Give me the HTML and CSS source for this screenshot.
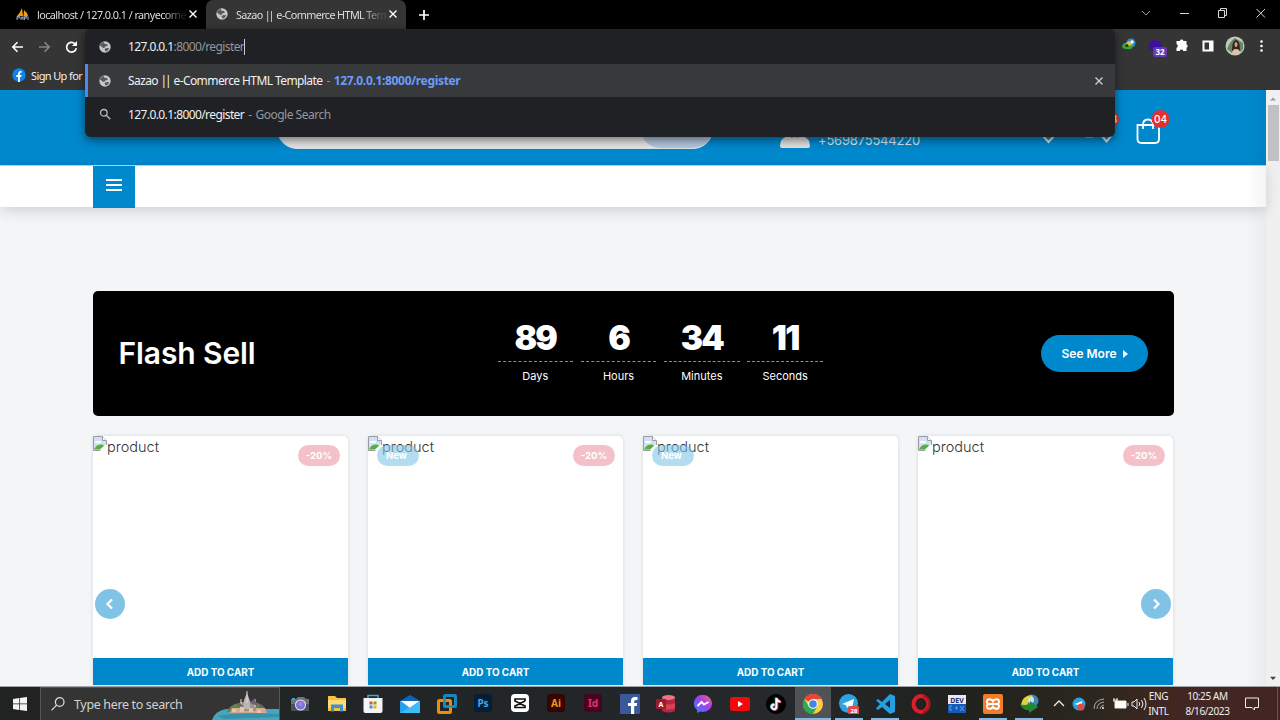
FILE: index.html
```html
<!DOCTYPE html>
<html lang="en">
<head>
<meta charset="utf-8">
<title>Sazao || e-Commerce HTML Template</title>
<link rel="stylesheet" href="styles.css">
</head>
<body>
<svg class="defs" aria-hidden="true">
  <symbol id="globe" viewBox="0 0 12 12"><circle cx="6" cy="6" r="5.7" fill="#c4c7cb"/><path d="M5 .9C3 1.1 1.3 2.7 1 4.6l3.3 2.3c1.3 0 1.9-.4 1.8-1.3l2.2-.6c.8-.9.3-1.7-.9-2L5.300 2.800z" fill="#44474b" opacity=".85"/><path d="M5.500 8l2-1 2.700.300c-.6 1.900-1.900 3.100-3.700 3.300z" fill="#44474b" opacity=".85"/></symbol>
  <symbol id="cross" viewBox="0 0 10 10"><path d="M1.500 1.500l7 7M8.500 1.500l-7 7" stroke="currentColor" stroke-width="1.400" fill="none"/></symbol>
  <symbol id="broken" viewBox="0 0 14 15"><path d="M.5.500h9l4 4v4.500l-5 5.500h-8z" fill="#cfe0f7" stroke="#9b9da3"/><path d="M9.500.500v4h4" fill="#fff" stroke="#9b9da3"/><path d="M2 7a2 2 0 0 1 3-2 2 2 0 0 1 3 2z" fill="#fff"/><path d="M1 13.500c2-4 4-5 8-5l2.500 1.500-4 3.500z" fill="#56b13c"/><path d="M13.500 9l-6 5.500" stroke="#fff" stroke-width="2"/></symbol>
</svg>

<div class="browser">
  <div class="tabs">
    <div class="tab">
      <svg class="tab-icon" viewBox="0 0 14 14"><path d="M1 9Q4 6 6 1L7 9zM7.500 9L8 3q3 2 4 6z" fill="#f89c0e"/><path d="M1 13V9.500h2.500V11H1M5 9.500V13m0-2h2V9.500V13m1.500 0V9.500H11V11H9m3-1.500V13" stroke="#9aa0b5" fill="none"/></svg>
      <span class="tab-title">localhost / 127.0.0.1 / ranyecome</span>
      <svg class="tab-close"><use href="#cross"/></svg>
    </div>
    <div class="tab active">
      <svg class="tab-icon globe"><use href="#globe"/></svg>
      <span class="tab-title">Sazao <span class="pipes">||</span> e-Commerce HTML Temp</span>
      <svg class="tab-close"><use href="#cross"/></svg>
    </div>
    <svg class="new-tab" viewBox="0 0 12 12"><path d="M6 1v10M1 6h10" stroke="#fff" stroke-width="1.700"/></svg>
    <svg class="window-controls" viewBox="0 0 126 14" fill="none" stroke="#d8d8d8"><path d="M1 5l4 4 4-4" stroke="#999"/><path d="M39 7.500h9"/><path d="M77.500 4.500h6v7h-6zM79.500 4.500v-2h6v7h-2"/><path d="M115.500 3l8.500 8.500M124 3l-8.500 8.500"/></svg>
  </div>
  <div class="toolbar">
    <svg class="nav-icons" viewBox="0 0 68 14" fill="none" stroke-width="1.600"><path d="M12 7H2m4.500-4.700L1.800 7l4.700 4.700" stroke="#fff"/><path d="M28 7h10m-4.500-4.700L38.200 7l-4.700 4.700" stroke="#858585"/><path d="M64 3.800A4.900 4.900 0 1 0 65.300 8.200" stroke="#fff" stroke-width="1.700"/><path d="M66 1v5h-5z" fill="#fff"/></svg>
    <svg class="extensions" viewBox="0 0 150 22">
      <circle cx="11" cy="7" r="4.500" fill="#3989c8"/><path d="M3 9l6-4 3 4-3 4z" fill="#e2cb23"/><path d="M2 11q0-4 4-4l1 3 7-1-3 4q-7 1-9-2z" fill="#37a634"/><circle cx="12" cy="6" r="1.700" fill="#fff"/><circle cx="7" cy="9.500" r="1.500" fill="#252a2a"/>
      <path d="M35 3.500l6 3v6l-6 3-6-3v-6z" fill="#3e0f9b"/><rect x="33" y="11" width="14" height="10" rx="2" fill="#6439b7"/><text x="40" y="19" text-anchor="middle">32</text>
      <path d="M57 6h3.300a1.900 1.900 0 0 1 3.700 0h3v3.400a1.800 1.800 0 0 1 0 3.400v3.200h-3.300a1.800 1.800 0 0 0-3.500 0H57v-3.300a1.900 1.900 0 0 0 0-3.600z" fill="#fff" transform="translate(-.5 -1)"/>
      <path d="M83.500 5.500h9v9h-9z" fill="none" stroke="#fff" stroke-width="2"/><path d="M89 5h4v10h-4z" fill="#fff"/>
      <circle cx="115" cy="10" r="9.500" fill="#c0ccb4"/><path d="M107 13q3-8 8-11l8 5v6q-4 6-10 5z" fill="#678567"/><path d="M112 15q0-11 4-11t4 11z" fill="#32251f"/><ellipse cx="116" cy="8.500" rx="1.500" ry="2.500" fill="#d2a083"/><path d="M112 18q0-5 4-5t4 4q-4 3-8 1z" fill="#e3c0a8"/>
      <circle cx="141.500" cy="5.500" r="1.300" fill="#fff"/><circle cx="141.500" cy="10" r="1.300" fill="#fff"/><circle cx="141.500" cy="14.500" r="1.300" fill="#fff"/>
    </svg>
  </div>
  <div class="bookmarks">
    <svg class="fb" viewBox="0 0 14 14"><circle cx="7" cy="7" r="6.700" fill="#0b84ee"/><path d="M6 14V9H4.300V7H6V5.500Q6 3 8.400 3h1.200v1.800H8.700q-.8 0-.8.900V7h1.700l-.3 2H7.900v5z" fill="#fff"/></svg>
    <span>Sign Up for</span>
  </div>

  <div class="omnibox">
    <div class="omni-row input">
      <svg class="omni-icon"><use href="#globe"/></svg>
      <span class="omni-url">127.0.0.1<span class="muted">:8000/register</span></span><i class="caret"></i>
    </div>
    <div class="omni-row selected">
      <svg class="omni-icon"><use href="#globe"/></svg>
      <span class="omni-title">Sazao <span class="pipes">||</span> e-Commerce HTML Template</span><span class="dash">-</span><b class="omni-link">127.0.0.1:8000/register</b>
      <svg class="omni-close"><use href="#cross"/></svg>
    </div>
    <div class="omni-row">
      <svg class="omni-icon" viewBox="0 0 12 12" fill="none" stroke="#b9bbbe" stroke-width="1.300"><circle cx="4.800" cy="4.800" r="3.300"/><path d="M7.300 7.300l4 4"/></svg>
      <span class="omni-query">127.0.0.1:8000/register</span><span class="dash">-</span><span class="muted google">Google Search</span>
    </div>
  </div>
</div>

<div class="viewport">
  <main class="page">
    <header class="site-header">
      <div class="search"><div class="search-button"></div></div>
      <svg class="user" viewBox="0 0 30 24"><circle cx="15" cy="7" r="7" fill="#d8dadd"/><path d="M0 24v-2q0-8 8-10 7 4 14 0 8 2 8 10 0 2-2 2H2q-2 0-2-2z" fill="#e0e0e0"/></svg>
      <span class="phone">+569875544220</span>
      <svg class="header-icons" viewBox="0 0 150 46" fill="none">
        <path d="M9 29l6.500 7 6.500-7" stroke="#d0e2ed" stroke-width="2"/><path d="M53 30.500h7" stroke="#d0e2ed" stroke-width="2"/><path d="M69 30l4.500 5.500L78 30" stroke="#d0e2ed" stroke-width="2"/>
        <circle cx="77.500" cy="13" r="8.500" fill="#e3302f"/><text x="78" y="17" text-anchor="middle">03</text>
        <path d="M104.500 19h21.500v14q0 4-4 4h-13.500q-4 0-4-4zM110 23v-4q0-5.500 5-5.500t5 5.500v4" stroke="#fff" stroke-width="1.800"/>
        <circle cx="127.500" cy="13" r="9" fill="#e3302f"/><text x="127.500" y="16.500" text-anchor="middle">04</text>
      </svg>
    </header>
    <nav class="site-nav"><div class="menu"><i></i><i></i><i></i></div></nav>
    <section class="flash">
      <h2>Flash Sell</h2>
      <div class="countdown">
        <div><strong>89</strong><span>Days</span></div>
        <div><strong>6</strong><span>Hours</span></div>
        <div><strong>34</strong><span>Minutes</span></div>
        <div><strong class="eleven">11</strong><span>Seconds</span></div>
      </div>
      <a class="more"><span>See More</span><svg viewBox="0 0 5 8"><path d="M0 0l5 4-5 4z" fill="#fff"/></svg></a>
    </section>
    <section class="products">
      <article><div class="picture"><svg><use href="#broken"/></svg><span>product</span></div><em class="sale">-20%</em><a class="cart">ADD TO CART</a></article>
      <article><div class="picture"><svg><use href="#broken"/></svg><span>product</span></div><em class="new">New</em><em class="sale">-20%</em><a class="cart">ADD TO CART</a></article>
      <article><div class="picture"><svg><use href="#broken"/></svg><span>product</span></div><em class="new">New</em><a class="cart">ADD TO CART</a></article>
      <article><div class="picture"><svg><use href="#broken"/></svg><span>product</span></div><em class="sale">-20%</em><a class="cart">ADD TO CART</a></article>
      <div class="arrow prev"><svg viewBox="0 0 12 12"><path d="M8 1.500L3.500 6 8 10.500" fill="none" stroke="#fff" stroke-width="2.200"/></svg></div>
      <div class="arrow next"><svg viewBox="0 0 12 12"><path d="M4 1.500L8.500 6 4 10.500" fill="none" stroke="#fff" stroke-width="2.200"/></svg></div>
    </section>
    <div class="edge-shade"></div>
  </main>
  <div class="scrollbar">
    <svg viewBox="0 0 8 5"><path d="M0 5l4-4 4 4z" fill="#9b9b9b"/></svg>
    <i class="thumb"></i>
    <svg class="down" viewBox="0 0 8 5"><path d="M0 0l4 4.500L8 0z" fill="#444"/></svg>
  </div>
</div>

<footer class="taskbar">
  <div class="start"><svg viewBox="0 0 14 14"><path d="M0 2l6-.9v5.500H0zM6.700 1L14 0v6.600H6.700zM0 7.300h6V13l-6-.9zM6.700 7.300H14V14l-7.300-1z" fill="#f4f4f4"/></svg></div>
  <div class="find">
    <svg class="find-icon" viewBox="0 0 14 14" fill="none" stroke="#ddd" stroke-width="1.200"><circle cx="8.700" cy="5" r="4.300"/><path d="M5.600 8.200L.5 13.300"/></svg>
    <span>Type here to search</span>
    <svg class="castle" viewBox="0 0 67 32"><path d="M0 32Q3 23 14 21h53v11z" fill="#48a5be"/><path d="M5 28q25-4 62-2v3l-55 2z" fill="#3592ad"/><path d="M15 24q2-7 12-9 14-4 22 2l6 7z" fill="#68814b"/><path d="M20 20h33l2 5H18z" fill="#d4a98c"/><path d="M28 14h16v9H28z" fill="#9c9087"/><path d="M32 12l3-7 3 8v8h-7z" fill="#b9b6b2"/><path d="M35 3v12M29 11v9M43 11v8" stroke="#dedad0"/><path d="M25 18l3-3 4 4M38 15l4-4 4 7M46 20l3-4 4 4" fill="#686370"/><path d="M20 21h4v3h-4zm8-2h4v5h-4zm9 1h4v4h-4zm8 2h4v3h-4z" fill="#e7c4a5"/></svg>
  </div>
  <div class="apps">
    <div class="app"><svg viewBox="0 0 20 20"><path d="M1 5h5l2-2h6l2 2h3v12H1z" fill="#6f747c"/><path d="M1 10h18v7H1z" fill="#4c5159"/><circle cx="10.500" cy="11" r="5.500" fill="#e8e5ef"/><circle cx="10.500" cy="11" r="4.500" fill="#6f78db"/><circle cx="10.500" cy="10" r="2.300" fill="#b07ad5"/><path d="M2 5h3" stroke="#39a7d9" stroke-width="2"/></svg></div>
    <div class="app"><svg viewBox="0 0 20 20"><path d="M1 2h7l2 2h9v13H1z" fill="#f5c243"/><path d="M1 6h18v8H1z" fill="#ffda71"/><path d="M4 17.500v-7h12v7h-3v-3.500H7v3.500z" fill="#3f90d5"/></svg></div>
    <div class="app"><svg viewBox="0 0 20 20"><path d="M5 5V1.500h10V5" fill="none" stroke="#40a6dc" stroke-width="1.500"/><path d="M.5 4h19v13q0 2-2 2h-15q-2 0-2-2z" fill="#f4f4f4"/><path d="M6.500 7.500h3v3h-3z" fill="#e74b25"/><path d="M10.500 7.500h3v3h-3z" fill="#78aa17"/><path d="M6.500 11.500h3v3h-3z" fill="#24a0dd"/><path d="M10.500 11.500h3v3h-3z" fill="#f5ae18"/></svg></div>
    <div class="app"><svg viewBox="0 0 20 20"><path d="M0 7l10-6 10 6v12H0z" fill="#1262bd"/><path d="M0 7h20v12H0z" fill="#24a0ec"/><path d="M1 7h18l-9 7z" fill="#fff"/><path d="M0 19L20 7v12z" fill="#4bc6fa" opacity=".7"/><path d="M1 7h18l-9 6z" fill="#fff"/></svg></div>
    <div class="app"><svg viewBox="0 0 20 20" fill="none" stroke-width="3"><rect x="7.500" y="1.500" width="11" height="11" rx="1" stroke="#1b87b9"/><rect x="1.500" y="6.500" width="12" height="12" rx="1" stroke="#ef8c0c"/><path d="M7.500 5v7.500H15" stroke="#1b87b9" stroke-width="2"/></svg></div>
    <div class="app"><svg viewBox="0 0 20 20"><rect x="1" y="0" width="18" height="18" rx="3" fill="#051e36"/><text x="10" y="12.500" fill="#40a7f1">Ps</text></svg></div>
    <div class="app"><svg viewBox="0 0 20 20"><rect x="1" y="0" width="18" height="18" rx="4" fill="#fff"/><path d="M15 7V5H5v2l10 5v1.500H5V12l10-5" fill="none" stroke="#111" stroke-width="1.700"/></svg></div>
    <div class="app"><svg viewBox="0 0 20 20"><rect x="1" y="0" width="18" height="18" rx="3" fill="#330700"/><text x="10" y="12.500" fill="#f69412">Ai</text></svg></div>
    <div class="app"><svg viewBox="0 0 20 20"><rect x="1" y="0" width="18" height="18" rx="3" fill="#49021f"/><text x="10" y="12.500" fill="#e3336e">Id</text></svg></div>
    <div class="app"><svg viewBox="0 0 20 20"><rect width="20" height="20" rx="1" fill="#3b5998"/><path d="M11 20v-8H8V9h3V7q0-4 4-4h2.500v3H16q-1.800 0-1.800 1.500V9h3l-.5 3h-2.500v8z" fill="#fff"/></svg></div>
    <div class="app"><svg viewBox="0 0 20 20"><path d="M6 3v14q7 3 13 0V3z" fill="#b02643"/><ellipse cx="12.500" cy="3.500" rx="6.500" ry="2.500" fill="#ea7780"/><path d="M6 9q7 3 13 0v5q-6 3-13 0z" fill="#d64454"/><rect y="5" width="10" height="10" rx="1" fill="#a0182c"/><text x="5" y="13" fill="#fff" class="small">A</text></svg></div>
    <div class="app"><svg viewBox="0 0 20 20"><defs><linearGradient id="msg" x1="0" y1="1" x2="1" y2="0"><stop stop-color="#2788ff"/><stop offset=".55" stop-color="#a33bf5"/><stop offset="1" stop-color="#ff686e"/></linearGradient></defs><path d="M10 1a9 8.500 0 0 1 0 17l-3-.4L4 19v-3A8.500 8.500 0 0 1 10 1z" fill="url(#msg)"/><path d="M4.500 12l4-4 2.500 2.500L15.500 8" fill="none" stroke="#fff" stroke-width="2"/></svg></div>
    <div class="app"><svg viewBox="0 0 20 20"><rect y="3" width="20" height="14" rx="3" fill="#f20a0a"/><path d="M8 7l5 3-5 3z" fill="#fff"/></svg></div>
    <div class="app"><svg viewBox="0 0 20 20"><circle cx="10" cy="10" r="10" fill="#000"/><path d="M10.500 4v9a2.400 2.400 0 1 1-2-2.400M10.500 4q.6 3.500 4 3.600" fill="none" stroke="#e93b63" stroke-width="2.200" transform="translate(.7 .5)"/><path d="M10.500 4v9a2.400 2.400 0 1 1-2-2.400M10.500 4q.6 3.500 4 3.600" fill="none" stroke="#35dfdc" stroke-width="2.200" transform="translate(-.6 -.4)"/><path d="M10.500 4v9a2.400 2.400 0 1 1-2-2.400M10.500 4q.6 3.500 4 3.600" fill="none" stroke="#fff" stroke-width="1.700"/></svg></div>
    <div class="app current"><svg viewBox="0 0 20 20"><circle cx="10" cy="10" r="10" fill="#ffcd40"/><path d="M10 10L1.300 5A10 10 0 0 1 18.700 5H10z" fill="#e9453a"/><path d="M1.300 5A10 10 0 0 0 10 20l4.300-7.500L10 10 5.700 12.500z" fill="#2da94f"/><circle cx="10" cy="10" r="4.800" fill="#fff"/><circle cx="10" cy="10" r="3.800" fill="#4285e8"/></svg></div>
    <div class="app open"><svg viewBox="0 0 20 20"><circle cx="9.500" cy="9.500" r="9.500" fill="#2ca5df"/><path d="M3 10l12-5-2 9-3-2-2 2-1-3z" fill="#fff"/><rect x="9" y="12" width="12" height="9" rx="3" fill="#e34b46"/><text x="15" y="19" fill="#fff" class="tiny">28</text></svg></div>
    <div class="app open"><svg viewBox="0 0 20 20"><path d="M15 0l5 2v16l-5 2-8-7-4 3-2-1.500L5 10 1 6.500 3 5l4 3zM15 6l-5 4 5 4z" fill="#249fe2" fill-rule="evenodd"/></svg></div>
    <div class="app"><svg viewBox="0 0 20 20"><ellipse cx="10" cy="10" rx="7.500" ry="8" fill="none" stroke="#e01b2b" stroke-width="4"/><path d="M12 2q6 1 6 8t-6 8" fill="none" stroke="#a7131d" stroke-width="2"/></svg></div>
    <div class="app"><svg viewBox="0 0 20 20"><path d="M1 1h18v9H1z" fill="#e9e9ef"/><path d="M1 10h18v9H1z" fill="#135bb5"/><text x="10" y="8.500" fill="#222d6d" class="small">DEV</text><path d="M5 12H3v4h2M8 14h3m-1.500-1.500v3M13 12l4 5m0-5l-4 5" stroke="#5ca2e8" fill="none"/></svg></div>
    <div class="app open"><svg viewBox="0 0 20 20"><rect width="20" height="20" rx="2" fill="#f37b2c"/><path d="M8 10h4M8 10Q3 10 4 7t5-1l1 1.500L11 6q4-2 5 1t-4 3M8 10q-5 0-4 3t5 1l1-1.500 1 1.500q4 2 5-1t-4-3" fill="none" stroke="#fff" stroke-width="2"/></svg></div>
    <div class="app open"><svg viewBox="0 0 20 20"><circle cx="13" cy="7" r="6.500" fill="#3e85bb"/><path d="M2 11Q3 2 12 1l3 3q-5 1-8 9z" fill="#e3ce3b"/><circle cx="12" cy="6" r="3" fill="#c8e5ef"/><path d="M1 10q4 2 10 0V7l8 6-9 6v-3q-6 1-9-6z" fill="#208a30"/></svg></div>
  </div>
  <svg class="tray" viewBox="0 0 94 18" fill="none" stroke="#eee">
    <path d="M1 11l5-5 5 5" stroke-width="1.300"/><circle cx="26" cy="9" r="6.500" fill="#2ba2dd" stroke="none"/><path d="M21.500 9l8-3-1.500 6-3-2z" fill="#fff" stroke="none"/><circle cx="28" cy="12" r="3.500" fill="#e34a46" stroke="none"/>
    <path d="M41 14q0-9 10-10M44 14q0-6 7-7M47 14q0-3 4-4" stroke="#aaa"/><circle cx="50" cy="13" r="1" fill="#eee" stroke="none"/><path d="M62 6h11v7H62z" fill="#fff"/><path d="M75 8v3M60 5h5M61 3v4M64 3v4"/><path d="M79 7h2l3-3v10l-3-3h-2zM86 7q1.500 2 0 4M88.500 5q3 4 0 8M91 3q4 6 0 12"/>
  </svg>
  <div class="lang"><span>ENG</span><span>INTL</span></div>
  <div class="clock"><span>10:25 AM</span><span>8/16/2023</span></div>
  <svg class="notice" viewBox="0 0 14 14" fill="none" stroke="#eee"><path d="M.5 1h13v9.500h-4v2.500L7 10.500H.5z"/></svg>
  <i class="peek"></i>
</footer>
</body>
</html>
```
FILE: styles.css
```css
* { box-sizing: border-box; }
body { margin: 0; width: 1280px; height: 720px; overflow: hidden; display: flex; flex-direction: column; font-family: "Noto Sans", "Open Sans", sans-serif; }
svg { display: block; flex: none; }
.defs { position: absolute; width: 0; height: 0; }

.browser { position: relative; z-index: 5; height: 90px; background: #353535; color: #f1f1f1; font-size: 11px; }
.tabs { height: 29px; display: flex; align-items: center; background: #000; }
.tab { width: 206px; height: 29px; padding: 0 8px 1px 16px; display: flex; align-items: center; color: #ddd; font-size: 10.800px; letter-spacing: -.55px; }
.tab.active { width: 200px; padding: 0 8px 1px 10px; background: #353535; border-radius: 7px 7px 0 0; letter-spacing: -.6px; }
.tab-icon { width: 14px; height: 14px; margin-right: 7px; }
.tab-icon.globe { width: 12px; height: 12px; margin-right: 8px; }
.tab-title { width: 150px; white-space: nowrap; -webkit-mask-image: linear-gradient(90deg, #000 84%, rgba(0,0,0,.15) 97%); mask-image: linear-gradient(90deg, #000 84%, rgba(0,0,0,.15) 97%); }
.pipes { letter-spacing: -2.200px; margin-right: 1.600px; }
.tab-close { width: 10px; height: 10px; margin-left: auto; color: #fff; }
.new-tab { width: 12px; height: 12px; margin-left: 12px; }
.window-controls { width: 126px; height: 14px; margin: 0 13px 3px auto; }
.toolbar { height: 35px; display: flex; align-items: center; justify-content: space-between; padding: 0 10px 0 11px; }
.nav-icons { width: 68px; height: 14px; }
.extensions { width: 150px; height: 22px; }
.extensions text { fill: #fff; font: 700 8px "Noto Sans", sans-serif; }
.bookmarks { height: 22px; padding-left: 12px; display: flex; align-items: center; gap: 5px; letter-spacing: -.62px; }
.fb { width: 14px; height: 14px; }
.bookmarks span { white-space: nowrap; }

.omnibox { position: absolute; left: 85px; top: 29px; width: 1030px; height: 108px; background: #202124; border-radius: 6px; overflow: hidden; box-shadow: 0 3px 10px rgba(0,0,0,.5); font-size: 12px; }
.omni-row { height: 34px; padding-left: 14px; display: flex; align-items: center; white-space: nowrap; letter-spacing: -.59px; }
.omni-row.input { height: 35px; }
.omni-row.selected { height: 33px; background: #37393b; border-left: 3px solid #5188ee; padding-left: 11px; }
.omni-icon { width: 12px; height: 12px; margin-right: 17px; }
.muted { color: #94979b; }
.dash { margin: 0 4px; color: #94979b; }
.caret { width: 1px; height: 16px; background: #ccc; }
.omni-link { color: #6b9cfa; letter-spacing: -.33px; }
.google { letter-spacing: -.5px; }
.omni-close { width: 10px; height: 10px; margin-left: auto; margin-right: 11px; color: #ccc; }

.viewport { height: 596px; display: flex; }
.page { position: relative; width: 1266px; height: 596px; background: #f3f5f7; font-family: Inter, sans-serif; }
.site-header { height: 76px; padding: 19px 0 0 277px; display: flex; align-items: flex-start; background: #08c; border-bottom: 1px solid #b0dcf1; color: #fff; }
.search { width: 436px; height: 40px; background: #e4e4e5; border-radius: 20px; border: 1px solid #d8e2e9; display: flex; justify-content: flex-end; overflow: hidden; }
.search-button { width: 71px; background: #b4c6dd; border-radius: 20px; }
.user { width: 30px; height: 24px; margin: 15px 8px 0 67px; }
.phone { width: 103px; margin-top: 23px; font-size: 13px; line-height: 16px; letter-spacing: -.2px; color: #d9e8f0; }
.header-icons { width: 150px; height: 46px; margin: -3px 0 0 112px; }
.header-icons text { fill: #fff; font: 500 10px Inter, sans-serif; }
.site-nav { position: relative; height: 41px; padding-left: 93px; background: #fff; box-shadow: 0 4px 14px rgba(0,0,0,.15); }
.menu { width: 41.500px; height: 41.500px; padding: 13px 13px 0; background: #08c; display: grid; grid-template-rows: repeat(3, 2px); gap: 3.200px; }
.menu i { background: #fff; }
.flash { width: 1080.500px; height: 125px; margin: 84px 0 0 93px; padding: 0 25.500px; background: #000; border-radius: 5px; color: #fff; display: grid; grid-template-columns: 379px 330px 1fr; align-items: center; }
.flash h2 { margin: 0 0 2px; font-size: 30px; font-weight: 600; letter-spacing: -.1px; }
.countdown { display: grid; grid-template-columns: repeat(4, 75.500px); gap: 7.800px; text-align: center; margin-bottom: 3px; }
.countdown div { display: flex; flex-direction: column; }
.countdown strong { height: 42px; font-size: 33.500px; line-height: 36px; font-weight: 900; letter-spacing: -1.800px; border-bottom: 1px dashed #8e8e8e; }
.countdown span { margin-top: 6px; font-size: 11px; line-height: 17px; }
.more { justify-self: end; width: 107px; height: 37px; border-radius: 19px; background: #08c; display: flex; align-items: center; justify-content: center; gap: 6px; font-size: 12px; font-weight: 600; }
.more svg { width: 5px; height: 8px; }
.products { position: relative; width: 1080px; height: 249px; margin: 20px 0 0 93px; display: grid; grid-template-columns: repeat(4, 255px); gap: 20px; }
.products article { position: relative; display: flex; flex-direction: column; justify-content: space-between; background: #fff; border-radius: 5px 5px 0 0; box-shadow: 0 0 4px rgba(0,0,0,.12); }
.picture { display: flex; align-items: flex-start; color: #333; font-size: 14.500px; line-height: 21px; font-weight: 300; }
.picture svg { width: 14px; height: 15px; }
.cart { height: 27px; display: flex; align-items: center; justify-content: center; background: #08c; color: #fff; font-size: 9.900px; font-weight: 700; }
.sale, .new { position: absolute; top: 9px; width: 42px; height: 21px; border-radius: 11px; color: #fff; text-align: center; font-size: 9.500px; line-height: 21px; font-style: normal; font-weight: 700; }
.sale { right: 8px; background: #f3c1c7; }
.new { left: 9px; background: rgba(128,196,230,.6); padding-right: 3px; }
.arrow { position: absolute; top: 153px; width: 30px; height: 30px; border-radius: 50%; background: #80c3e5; display: flex; align-items: center; justify-content: center; }
.arrow svg { width: 12px; height: 12px; }
.prev { left: 2px; }
.next { right: 2px; }
.edge-shade { position: absolute; top: 0; right: 0; width: 20px; height: 596px; background: linear-gradient(90deg, transparent, rgba(0,0,0,.045)); }
.scrollbar { width: 14px; height: 596px; padding: 6px 1px 0; display: flex; flex-direction: column; align-items: center; background: #f0f0f0; }
.scrollbar svg { width: 6px; height: 5px; }
.thumb { width: 11px; height: 56px; margin-top: 4px; background: #c1c1c1; }
.scrollbar .down { margin-top: auto; margin-bottom: 5px; }

.taskbar { height: 34px; display: flex; background: linear-gradient(90deg, #202321 0, #222628 45%, #25292c 61%, #20211d 75%, #2b271e 85%, #412723 92%, #432523 100%); border-top: 1px solid #9fa7aa; color: #eee; }
.start { width: 40px; display: flex; align-items: center; justify-content: center; }
.start svg { width: 14px; height: 14px; }
.find { width: 240px; padding-left: 10px; display: flex; align-items: center; gap: 9px; background: #343434; border: 1px solid #555; border-bottom: 0; color: #d2d2d2; font-size: 12.500px; letter-spacing: -.35px; white-space: nowrap; }
.find-icon { width: 14px; height: 14px; }
.castle { width: 67px; height: 32px; margin-left: auto; }
.apps { flex: none; width: 765.750px; margin-left: 1.700px; display: grid; grid-template-columns: repeat(15, 36.650px) repeat(6, 36px); }
.app { display: flex; justify-content: center; align-items: center; }
.app svg { width: 20px; height: 20px; }
.app text { text-anchor: middle; font: 700 10px "Noto Sans", sans-serif; }
.app text.small { font-size: 7px; }
.app text.tiny { font-size: 6px; }
.open { background: linear-gradient(#83b7e6, #83b7e6) center bottom / 28px 2px no-repeat; }
.current { background: #505355; border-bottom: 2px solid #83b7e6; }
.current svg { margin-top: 2px; }
.tray { width: 94px; height: 18px; margin: 8px 0 0 6px; }
.lang, .clock { display: flex; flex-direction: column; align-items: center; padding-top: 2px; font-size: 10px; line-height: 15px; letter-spacing: -.38px; white-space: nowrap; }
.lang { width: 20px; margin-left: 1px; }
.clock { width: 50px; margin-left: 14px; }
.notice { width: 14px; height: 14px; margin: 10px 0 0 13px; }
.peek { width: 1px; margin-left: auto; margin-right: 2px; background: #655; }
```
